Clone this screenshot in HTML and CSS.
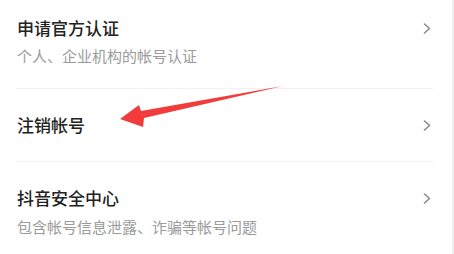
FILE: index.html
```html
<!DOCTYPE html>
<html lang="zh">
<head>
<meta charset="utf-8">
<link rel="stylesheet" href="styles.css">
</head>
<body>
<div class="page">
  <div class="list">
    <div class="row row-first">
      <div class="texts">
        <div class="title">申请官方认证</div>
        <div class="sub">个人、企业机构的帐号认证</div>
      </div>
      <svg class="chev" width="8" height="11" viewBox="0 0 8 11"><path d="M1.5 1 L6.5 5.5 L1.5 10" fill="none" stroke="#8a8a8a" stroke-width="1.6" stroke-linecap="round" stroke-linejoin="round"/></svg>
    </div>
    <div class="row row-mid">
      <div class="texts">
        <div class="title">注销帐号</div>
      </div>
      <svg class="chev" width="8" height="11" viewBox="0 0 8 11"><path d="M1.5 1 L6.5 5.5 L1.5 10" fill="none" stroke="#8a8a8a" stroke-width="1.6" stroke-linecap="round" stroke-linejoin="round"/></svg>
    </div>
    <div class="row row-last">
      <div class="texts">
        <div class="title">抖音安全中心</div>
        <div class="sub">包含帐号信息泄露、诈骗等帐号问题</div>
      </div>
      <svg class="chev" width="8" height="11" viewBox="0 0 8 11"><path d="M1.5 1 L6.5 5.5 L1.5 10" fill="none" stroke="#8a8a8a" stroke-width="1.6" stroke-linecap="round" stroke-linejoin="round"/></svg>
    </div>
  </div>
  <div class="edge"></div>
  <svg class="arrow" width="454" height="254" viewBox="0 0 454 254">
    <polygon points="120,119 139,105 141,111 283,86 144,118 143,127" fill="#f23c3c"/>
  </svg>
</div>
</body>
</html>
```

FILE: styles.css
```css
html, body {
  margin: 0;
  padding: 0;
  background: #ffffff;
}
.page {
  position: relative;
  width: 454px;
  height: 254px;
  display: flex;
  overflow: hidden;
  font-family: "Noto Sans CJK SC", "Noto Sans", sans-serif;
}
.list {
  flex: 1;
  padding: 0 19px 0 16px;
}
.row {
  display: flex;
  align-items: center;
  justify-content: space-between;
  border-bottom: 1px solid #f1f1f1;
}
.row-first {
  height: 89px;
  align-items: flex-start;
  padding-top: 16px;
  box-sizing: border-box;
}
.row-first .chev {
  margin-top: 7px;
}
.row-mid {
  height: 72px;
}
.row-last {
  border-bottom: none;
  align-items: flex-start;
  padding-top: 24px;
}
.row-last .chev {
  margin-top: 7px;
}
.texts {
  display: flex;
  flex-direction: column;
}
.title {
  font-size: 17px;
  line-height: 24px;
  font-weight: 500;
  color: #222222;
  padding-left: 1px;
}
.sub {
  font-size: 15px;
  line-height: 20px;
  color: #9b9b9b;
  margin-top: 6px;
  padding-left: 1px;
}
.row-last .sub {
  margin-top: 7px;
}
.chev {
  display: block;
  margin-right: 2px;
}
.edge {
  width: 2px;
  background: #f0f0f0;
}
.arrow {
  position: absolute;
  left: 0;
  top: 0;
  pointer-events: none;
}
```
